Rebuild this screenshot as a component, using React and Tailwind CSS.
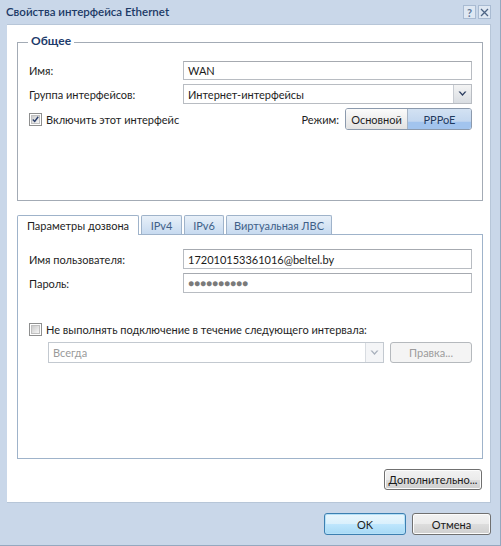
import React from "react";

function Checkbox({ checked }) {
  return (
    <div className="w-[13px] h-[13px] border border-[#8e8f8f] bg-white p-[1px] shrink-0">
      <div className="w-full h-full bg-[linear-gradient(135deg,#cbcbcb,#f6f6f6)] border border-[#c0c0c0] flex items-center justify-center">
        {checked && (
          <svg width="9" height="9" viewBox="0 0 9 9">
            <path d="M1 4.5 L3.5 7 L8 1" fill="none" stroke="#2b3f6b" strokeWidth="1.8" />
          </svg>
        )}
      </div>
    </div>
  );
}

function Arrow({ color = "#2c3e60" }) {
  return (
    <svg width="9" height="6" viewBox="0 0 9 6">
      <path d="M0.5 0.5 L4.5 5 L8.5 0.5 L6.8 0.5 L4.5 3 L2.2 0.5 Z" fill={color} />
    </svg>
  );
}

function Input({ children, className = "" }) {
  return (
    <div className={"h-[19px] flex-1 border border-[#b8bcc2] border-t-[#a6aab0] bg-white flex items-center pl-[4px] text-[#1a1a1a] " + className}>
      {children}
    </div>
  );
}

function Button({ children, className = "", disabled }) {
  return (
    <div
      className={
        "h-[21px] flex items-center justify-center rounded-[3px] border " +
        (disabled
          ? "border-[#b5b9bd] bg-[#f4f4f4] text-[#9c9c9c] "
          : "border-[#707070] bg-[linear-gradient(to_bottom,#f2f2f2_0%,#ebebeb_50%,#dddddd_51%,#cfcfcf_100%)] text-[#1a1a1a] shadow-[inset_0_0_0_1px_#fcfcfc] ") +
        className
      }
    >
      {children}
    </div>
  );
}

export default function App() {
  return (
    <div className="w-[501px] h-[546px] bg-[#c9d7e9] flex flex-col font-['Lato','Noto_Sans',sans-serif] text-[11px] leading-none text-[#1e1e1e] border-r border-b border-[#95a8bf]">
      {/* Title bar */}
      <div className="h-[24px] flex items-center pl-[6px] pr-[9px] shrink-0">
        <div className="flex-1 font-semibold text-[11.5px] text-[#1c3a66]">Свойства интерфейса Ethernet</div>
        <div className="flex gap-[2px]">
          <div className="w-[13px] h-[14px] border border-[#a9bbd2] bg-[#dfe8f3] flex items-center justify-center text-[11px] font-bold text-[#5f7898]">?</div>
          <div className="w-[13px] h-[14px] border border-[#a9bbd2] bg-[#dfe8f3] flex items-center justify-center">
            <svg width="9" height="9" viewBox="0 0 9 9">
              <path d="M1 1 L8 8 M8 1 L1 8" stroke="#4d6485" strokeWidth="1.3" />
            </svg>
          </div>
        </div>
      </div>

      {/* White content area */}
      <div className="ml-[7px] mr-[9px] h-[479px] bg-white border border-[#b7c6d8] border-l-0 flex flex-col pl-[10px] pr-[7px] shrink-0">
        {/* General group */}
        <div className="relative mt-[17px] h-[159px] border border-[#a3abb5] pt-[18px] pl-[11px] pr-[10px] flex flex-col gap-[4px]">
          <div className="absolute -top-[8px] left-[10px] bg-white px-[3px] font-bold text-[12px] text-[#1d3b6b]">Общее</div>
          <div className="flex items-center">
            <div className="w-[154px]">Имя:</div>
            <Input>WAN</Input>
          </div>
          <div className="flex items-center">
            <div className="w-[154px]">Группа интерфейсов:</div>
            <div className="h-[20px] flex-1 border border-[#b8bcc2] bg-white flex items-center">
              <div className="flex-1 pl-[4px]">Интернет-интерфейсы</div>
              <div className="w-[18px] h-full bg-[linear-gradient(to_bottom,#f4f4f4,#d9dde2)] border-l border-[#c8ccd2] flex items-center justify-center">
                <Arrow />
              </div>
            </div>
          </div>
          <div className="flex items-center h-[22px]">
            <Checkbox checked />
            <div className="ml-[4px] flex-1">Включить этот интерфейс</div>
            <div className="mr-[6px]">Режим:</div>
            <div className="w-[127px] h-[22px] flex border border-[#8c9aad] rounded-[3px] overflow-hidden">
              <div className="w-[62px] flex items-center justify-center bg-[linear-gradient(to_bottom,#fbfbfb,#e2e2e2)] border-r border-[#a7b4c4]">Основной</div>
              <div className="flex-1 flex items-center justify-center text-[#1f3a5f] bg-[linear-gradient(to_bottom,#d3e2f3_0%,#c3d7ef_62%,#a2c4ee_64%,#a2c4ee_100%)]">PPPoE</div>
            </div>
          </div>
        </div>

        {/* Tabs */}
        <div className="mt-[14px] flex items-end h-[19px] gap-[2px] relative z-10">
          <div className="w-[122px] border border-b-0 border-[#9fb3ca] bg-white flex items-center justify-center rounded-t-[2px] h-[20px] -mb-[1px]">Параметры дозвона</div>
          <div className="w-[41px] h-[19px] border border-b-0 border-[#9fb3ca] bg-[linear-gradient(to_bottom,#e8f0f9,#c7daf0)] flex items-center justify-center text-[#405f88] rounded-t-[2px]">IPv4</div>
          <div className="w-[40px] h-[19px] border border-b-0 border-[#9fb3ca] bg-[linear-gradient(to_bottom,#e8f0f9,#c7daf0)] flex items-center justify-center text-[#405f88] rounded-t-[2px]">IPv6</div>
          <div className="w-[106px] h-[19px] border border-b-0 border-[#9fb3ca] bg-[linear-gradient(to_bottom,#e8f0f9,#c7daf0)] flex items-center justify-center text-[#405f88] rounded-t-[2px]">Виртуальная ЛВС</div>
        </div>
        <div className="h-[225px] border border-[#9fb3ca] pt-[14px] pl-[11px] pr-[10px] flex flex-col">
          <div className="flex items-center">
            <div className="w-[154px]">Имя пользователя:</div>
            <Input className="h-[20px]">172010153361016@beltel.by</Input>
          </div>
          <div className="flex items-center mt-[4px]">
            <div className="w-[154px]">Пароль:</div>
            <Input className="h-[20px] text-[#7a7a7a] text-[10px]">●●●●●●●●●●</Input>
          </div>
          <div className="flex items-center mt-[30px]">
            <Checkbox />
            <div className="ml-[4px]">Не выполнять подключение в течение следующего интервала:</div>
          </div>
          <div className="flex items-center mt-[6px] pl-[19px] gap-[6px]">
            <div className="h-[21px] flex-1 border border-[#c3c9d0] bg-white flex items-center">
              <div className="flex-1 pl-[4px] text-[#9a9a9a]">Всегда</div>
              <div className="w-[18px] h-full bg-[#f4f5f7] border-l border-[#d8dce1] flex items-center justify-center">
                <Arrow color="#a8b0bc" />
              </div>
            </div>
            <Button disabled className="w-[82px]">Правка...</Button>
          </div>
        </div>
        <div className="flex justify-end mt-[10px] pr-[1px]">
          <Button className="w-[98px]">Дополнительно...</Button>
        </div>
      </div>

      {/* Bottom bar */}
      <div className="flex-1 flex items-start justify-end pt-[10px] pr-[9px] gap-[6px]">
        <div className="w-[82px] h-[22px] rounded-[3px] border border-[#3c7fb1] shadow-[inset_0_0_0_1px_#b5e0f7] bg-[linear-gradient(to_bottom,#eaf6fd_0%,#d9f0fc_50%,#bee6fd_51%,#a7d9f5_100%)] flex items-center justify-center">OK</div>
        <Button className="w-[79px] h-[22px]">Отмена</Button>
      </div>
    </div>
  );
}
